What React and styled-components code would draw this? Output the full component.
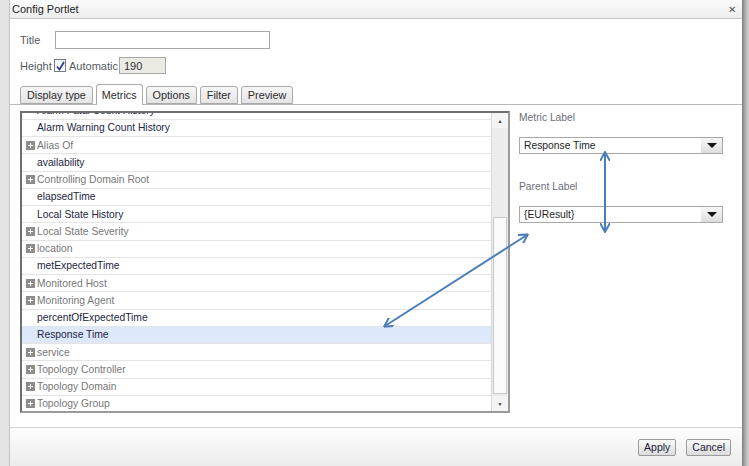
import React from "react";
import styled, { createGlobalStyle } from "styled-components";

const GlobalStyle = createGlobalStyle`
  body {
    margin: 0;
    font-family: "Liberation Sans", Arial, sans-serif;
    font-size: 11px;
  }
`;

const metrics = [
  { name: "Alarm Fatal Count History" },
  { name: "Alarm Warning Count History" },
  { name: "Alias Of", group: true },
  { name: "availability" },
  { name: "Controlling Domain Root", group: true },
  { name: "elapsedTime" },
  { name: "Local State History" },
  { name: "Local State Severity", group: true },
  { name: "location", group: true },
  { name: "metExpectedTime" },
  { name: "Monitored Host", group: true },
  { name: "Monitoring Agent", group: true },
  { name: "percentOfExpectedTime" },
  { name: "Response Time", selected: true },
  { name: "service", group: true },
  { name: "Topology Controller", group: true },
  { name: "Topology Domain", group: true },
  { name: "Topology Group", group: true }
];

const tabs = ["Display type", "Metrics", "Options", "Filter", "Preview"];

function PlusIcon() {
  return (
    <svg width="9" height="9" viewBox="0 0 9 9">
      <rect x="0" y="0" width="9" height="9" fill="#8c8c8c" />
      <rect x="2" y="4" width="5" height="1" fill="#fff" />
      <rect x="4" y="2" width="1" height="5" fill="#fff" />
    </svg>
  );
}

function App() {
  return (
    <Page>
      <GlobalStyle />
      <Gutter />
      <Dialog>
        <TitleBar>
          <span>Config Portlet</span>
          <Close>✕</Close>
        </TitleBar>
        <Body>
          <FieldRow $top={12}>
            <FieldLabel>Title</FieldLabel>
            <TextInput $width={215} />
          </FieldRow>
          <FieldRow $top={8}>
            <FieldLabel $width={34}>Height</FieldLabel>
            <CheckBox>
              <svg width="9" height="10" viewBox="0 0 9 10">
                <path d="M1 5.5 L3.5 8.5 L8 1" fill="none" stroke="#2a3f8f" strokeWidth="1.8" />
              </svg>
            </CheckBox>
            <FieldLabel $width={50}>Automatic</FieldLabel>
            <TextInput $width={47} $disabled value="190" readOnly />
          </FieldRow>
          <TabStrip>
            {tabs.map((t) => (
              <Tab key={t} $active={t === "Metrics"}>
                {t}
              </Tab>
            ))}
          </TabStrip>
          <TabBody>
            <ListBox>
              <ListViewport>
                <List>
                  {metrics.map((m) => (
                    <Row key={m.name} $selected={m.selected} $group={m.group}>
                      {m.group ? <PlusIcon /> : <Spacer />}
                      <span>{m.name}</span>
                    </Row>
                  ))}
                </List>
              </ListViewport>
              <ScrollBar>
                <ScrollArrow>▲</ScrollArrow>
                <ScrollTrack>
                  <ScrollThumb />
                </ScrollTrack>
                <ScrollArrow>▼</ScrollArrow>
              </ScrollBar>
            </ListBox>
            <SidePanel>
              <SideLabel $top={1}>Metric Label</SideLabel>
              <Select>
                <span>Response Time</span>
                <SelectButton>
                  <Caret />
                </SelectButton>
              </Select>
              <SideLabel $top={27}>Parent Label</SideLabel>
              <Select>
                <span>{"{EUResult}"}</span>
                <SelectButton>
                  <Caret />
                </SelectButton>
              </Select>
            </SidePanel>
          </TabBody>
        </Body>
        <Footer>
          <Button>Apply</Button>
          <Button>Cancel</Button>
        </Footer>
        <Arrows width="733" height="466" viewBox="10 0 733 466">
          <defs>
            <marker id="head" markerWidth="10" markerHeight="10" refX="8" refY="5" orient="auto-start-reverse" markerUnits="userSpaceOnUse">
              <path d="M0 0 L9 5 L0 10" fill="none" stroke="#4a7ebb" strokeWidth="2" />
            </marker>
          </defs>
          <line x1="605" y1="153" x2="605" y2="231" stroke="#4a7ebb" strokeWidth="2" markerStart="url(#head)" markerEnd="url(#head)" />
          <line x1="527" y1="235" x2="385" y2="326" stroke="#4a7ebb" strokeWidth="2" markerStart="url(#head)" markerEnd="url(#head)" />
        </Arrows>
      </Dialog>
      <Shadow />
    </Page>
  );
}

const Page = styled.div`
  display: flex;
  width: 749px;
  height: 466px;
  background: #e6e6e6;
  overflow: hidden;
`;

const Gutter = styled.div`
  width: 9px;
  border-right: 1px solid #c2c2c2;
  background: #e4e4e4;
`;

const Shadow = styled.div`
  width: 7px;
  background: linear-gradient(to right, #7c7c7c, #a9a9a9 40%, #d4d4d4);
`;

const Dialog = styled.div`
  position: relative;
  flex: 1;
  display: flex;
  flex-direction: column;
  background: #fff;
`;

const TitleBar = styled.div`
  height: 18px;
  display: flex;
  align-items: center;
  justify-content: space-between;
  padding: 0 6px 0 2px;
  border-bottom: 1px solid #c6c6c6;
  background: linear-gradient(#fbfbfb, #ededed);
  color: #1e1e1e;
  font-size: 11px;
`;

const Close = styled.span`
  font-size: 10px;
  color: #555;
`;

const Body = styled.div`
  flex: 1;
  display: flex;
  flex-direction: column;
  padding: 0 0 0 10px;
  border-bottom: 1px solid #d3d3d3;
`;

const FieldRow = styled.div`
  display: flex;
  align-items: center;
  margin-top: ${(p) => p.$top}px;
  color: #555a62;
`;

const FieldLabel = styled.span`
  width: ${(p) => p.$width || 35}px;
`;

const TextInput = styled.input`
  box-sizing: border-box;
  width: ${(p) => p.$width}px;
  height: ${(p) => (p.$disabled ? 17 : 18)}px;
  margin: 0;
  padding: 0 4px;
  border: 1px solid #a6a6a6;
  background: ${(p) => (p.$disabled ? "#ebebe4" : "#fff")};
  font-family: "Liberation Sans", Arial, sans-serif;
  font-size: 11px;
  color: #333;
`;

const CheckBox = styled.span`
  box-sizing: border-box;
  width: 12px;
  height: 13px;
  margin-right: 3px;
  display: flex;
  align-items: center;
  justify-content: center;
  border: 1px solid #6f7e92;
  background: linear-gradient(#f2f2f2, #fff);
`;

const TabStrip = styled.div`
  display: flex;
  align-items: flex-end;
  gap: 3px;
  height: 19px;
  margin-top: 11px;
  margin-left: -10px;
  padding-left: 10px;
  border-bottom: 1px solid #b8b8b8;
`;

const Tab = styled.div`
  box-sizing: border-box;
  height: ${(p) => (p.$active ? 21 : 18)}px;
  padding: 0 ${(p) => (p.$active ? 5 : 6)}px;
  margin-bottom: ${(p) => (p.$active ? -1 : 0)}px;
  display: flex;
  align-items: center;
  border: 1px solid #a9a9a9;
  border-bottom: ${(p) => (p.$active ? "none" : "1px solid #a9a9a9")};
  border-radius: 3px 3px 0 0;
  background: ${(p) => (p.$active ? "#fff" : "linear-gradient(#f6f6f6, #e4e4e4)")};
  color: #2b2b2b;
  font-size: 10.8px;
`;

const TabBody = styled.div`
  display: flex;
  padding-top: 6px;
`;

const ListBox = styled.div`
  box-sizing: border-box;
  width: 490px;
  height: 302px;
  display: flex;
  border: 2px solid #6e6e6e;
  border-right-color: #9a9a9a;
  border-bottom-color: #9a9a9a;
`;

const ListViewport = styled.div`
  flex: 1;
  overflow: hidden;
`;

const List = styled.div`
  margin-top: -10.5px;
`;

const Row = styled.div`
  box-sizing: border-box;
  height: 17.25px;
  display: flex;
  align-items: center;
  gap: 2px;
  padding-left: 4px;
  border-bottom: 1px solid #e4e4e4;
  background: ${(p) => (p.$selected ? "#dde8fa" : "#fff")};
  color: ${(p) => (p.$group ? "#777" : "#1c2640")};
  font-size: 10.3px;
  white-space: nowrap;
`;

const Spacer = styled.span`
  width: 9px;
`;

const ScrollBar = styled.div`
  width: 16px;
  display: flex;
  flex-direction: column;
  border-left: 1px solid #d8d8d8;
  background: #f4f4f4;
`;

const ScrollArrow = styled.div`
  height: 15px;
  display: flex;
  align-items: center;
  justify-content: center;
  font-size: 5px;
  color: #333;
`;

const ScrollTrack = styled.div`
  flex: 1;
  display: flex;
  flex-direction: column;
  justify-content: flex-end;
  padding: 0 1px 2px;
  background: #ececec;
`;

const ScrollThumb = styled.div`
  height: 175px;
  border: 1px solid #c9c9c9;
  background: #fafafa;
`;

const SidePanel = styled.div`
  display: flex;
  flex-direction: column;
  padding-left: 9px;
`;

const SideLabel = styled.div`
  margin-top: ${(p) => p.$top || 0}px;
  margin-bottom: 14px;
  color: #6b6d78;
  font-size: 10.3px;
`;

const Select = styled.div`
  box-sizing: border-box;
  width: 204px;
  height: 17px;
  display: flex;
  align-items: center;
  justify-content: space-between;
  padding-left: 4px;
  border: 1px solid #a8a8a8;
  color: #1e1e1e;
  font-size: 10.3px;
`;

const SelectButton = styled.div`
  width: 21px;
  height: 100%;
  display: flex;
  align-items: center;
  justify-content: center;
  background: linear-gradient(#f7f7f7, #dedede);
`;

const Caret = styled.span`
  width: 0;
  height: 0;
  border-left: 5px solid transparent;
  border-right: 5px solid transparent;
  border-top: 5px solid #111;
`;

const Footer = styled.div`
  height: 38px;
  display: flex;
  align-items: center;
  justify-content: flex-end;
  gap: 10px;
  padding-right: 11px;
  background: linear-gradient(#fdfdfd, #ececec);
`;

const Button = styled.button`
  box-sizing: border-box;
  height: 17px;
  padding: 0 5px;
  border: 1px solid #9a9a9a;
  border-radius: 2px;
  background: linear-gradient(#fafafa, #dcdcdc);
  font-family: "Liberation Sans", Arial, sans-serif;
  font-size: 10.5px;
  color: #1a1a3a;
`;

const Arrows = styled.svg`
  position: absolute;
  left: 0;
  top: 0;
  pointer-events: none;
`;

export default App;
